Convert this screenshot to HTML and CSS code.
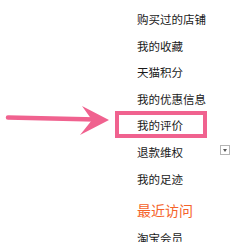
FILE: index.html
```html
<!DOCTYPE html>
<html lang="zh-CN">
<head>
  <meta charset="UTF-8" />
  <meta name="viewport" content="width=device-width, initial-scale=1.0"/>
  <title>我的淘宝</title>
  <link rel="stylesheet" href="styles.css">
</head>
<body>
  <ul class="menu">
    <li>购买过的店铺</li>
    <li>我的收藏</li>
    <li>天猫积分</li>
    <li>我的优惠信息</li>
    <li class="marked">我的评价</li>
    <li class="has-more">
      <span>退款维权</span>
      <span class="more-btn"></span>
    </li>
    <li>我的足迹</li>
    <li class="recent">最近访问</li>
    <li class="member">淘宝会员</li>
  </ul>

  <!-- annotation arrow -->
  <svg class="arrow" width="116" height="40" viewBox="0 100 116 40">
    <line x1="8" y1="117.5" x2="96" y2="119.5" stroke="#f0628f" stroke-width="4.5" stroke-linecap="round"/>
    <path d="M82 106 L109 120 L80 135 L92 120 Z" fill="#f0628f"/>
  </svg>
</body>
</html>
```

FILE: styles.css
```css
body {
  font-family: "Noto Sans CJK SC", "Microsoft YaHei", sans-serif;
  background-color: #fff;
  color: #1a1a1a;
  margin: 0;
  padding: 0;
  position: relative;
  height: 242px;
  overflow: hidden;
}
.menu {
  list-style: none;
  margin: 0;
  padding: 6px 0 0 137px;
  width: 95px;
}
.menu li {
  font-size: 11.5px;
  height: 26.6px;
  line-height: 26.6px;
  white-space: nowrap;
}
.marked {
  position: relative;
}
.marked::before {
  content: "";
  position: absolute;
  left: -22px;
  top: -1px;
  width: 84px;
  height: 19px;
  border: 4px solid #f0628f;
}
.has-more {
  display: flex;
  justify-content: space-between;
  align-items: center;
}
.more-btn {
  width: 8px;
  height: 8px;
  border: 1px solid #b5b5b5;
  margin-top: -4px;
  position: relative;
  margin-right: 2px;
}
.more-btn::after {
  content: "";
  position: absolute;
  left: 1.5px;
  top: 2.5px;
  border-left: 2.5px solid transparent;
  border-right: 2.5px solid transparent;
  border-top: 3px solid #555;
}
.menu li.recent {
  color: #f5632a;
  font-size: 14px;
  height: 36px;
  line-height: 36px;
}
.menu li.member {
  height: 20px;
  line-height: 20px;
}
.arrow {
  position: absolute;
  left: 0;
  top: 100px;
}
```
